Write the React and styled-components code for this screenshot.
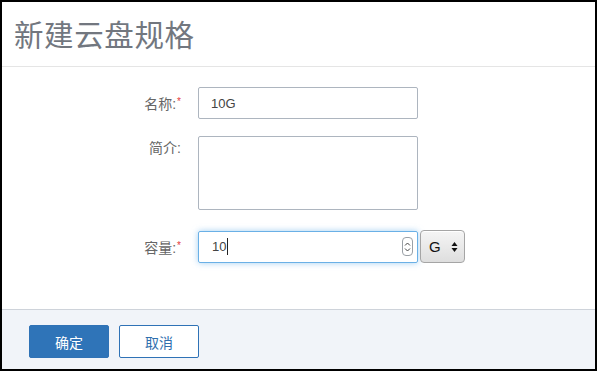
import React from "react"
import styled, { createGlobalStyle } from "styled-components"

const GlobalStyle = createGlobalStyle`
  html, body {
    margin: 0;
    padding: 0;
    background: #fff;
  }
  * {
    box-sizing: border-box;
  }
`

const font = `"Liberation Sans", "Noto Sans CJK SC", "Noto Sans", sans-serif`

export default function App() {
  return (
    <>
      <GlobalStyle />
      <Dialog>
        <Header>
          <Title>新建云盘规格</Title>
        </Header>
        <Body>
          <Row>
            <Label>
              名称:<Required>*</Required>
            </Label>
            <Input defaultValue="10G" />
          </Row>
          <Row $top $gap={17}>
            <Label $offset>简介:</Label>
            <TextArea />
          </Row>
          <Row $gap={20}>
            <Label>
              容量:<Required>*</Required>
            </Label>
            <NumberBox>
              <NumberValue>
                10<Caret />
              </NumberValue>
              <Spinner>
                <svg width="7" height="12" viewBox="0 0 7 12">
                  <path d="M1 4.5 L3.5 2 L6 4.5" fill="none" stroke="#444" strokeWidth="1" />
                  <path d="M1 7.5 L3.5 10 L6 7.5" fill="none" stroke="#444" strokeWidth="1" />
                </svg>
              </Spinner>
            </NumberBox>
            <UnitSelect>
              <span>G</span>
              <svg width="7" height="12" viewBox="0 0 7 12">
                <path d="M0.5 5 L3.5 1 L6.5 5 Z" fill="#111" />
                <path d="M0.5 7 L3.5 11 L6.5 7 Z" fill="#111" />
              </svg>
            </UnitSelect>
          </Row>
        </Body>
        <Footer>
          <Button $primary>确定</Button>
          <Button>取消</Button>
        </Footer>
      </Dialog>
    </>
  )
}

const Dialog = styled.div`
  width: 597px;
  height: 371px;
  border: 2px solid #000;
  display: flex;
  flex-direction: column;
  font-family: ${font};
  background: #fff;
`

const Header = styled.div`
  height: 65px;
  border-bottom: 1px solid #e5e5e5;
  display: flex;
  align-items: center;
  padding: 0 12px 2px;
`

const Title = styled.h1`
  margin: 0;
  font-size: 29.5px;
  font-weight: normal;
  color: #72777f;
  letter-spacing: 0.6px;
`

const Body = styled.div`
  flex: 1;
  padding-top: 20px;
  display: flex;
  flex-direction: column;
`

const Row = styled.div`
  display: flex;
  align-items: ${(p) => (p.$top ? "flex-start" : "center")};
  margin-top: ${(p) => (p.$gap != null ? p.$gap : 16)}px;
  &:first-child {
    margin-top: 0;
  }
`

const Label = styled.label`
  width: 179px;
  margin-right: 17px;
  text-align: right;
  font-size: 14px;
  color: #666;
  padding-top: ${(p) => (p.$offset ? "1px" : "0")};
`

const Required = styled.span`
  color: #e4393c;
  font-size: 10px;
  vertical-align: 4px;
  margin-left: 1px;
`

const Input = styled.input`
  width: 220px;
  height: 32px;
  border: 1px solid #adb5bf;
  border-radius: 2px;
  padding: 0 12px;
  font-family: ${font};
  font-size: 13px;
  color: #444;
  outline: none;
`

const TextArea = styled.textarea`
  width: 220px;
  height: 74px;
  border: 1px solid #adb5bf;
  border-radius: 2px;
  resize: none;
  outline: none;
  font-family: ${font};
  font-size: 13px;
`

const NumberBox = styled.div`
  width: 220px;
  height: 32px;
  border: 1px solid #6ab0e6;
  border-radius: 2px;
  box-shadow: 0 0 6px rgba(102, 175, 233, 0.6);
  display: flex;
  align-items: center;
  justify-content: space-between;
  padding: 0 4px 0 13px;
  font-size: 13px;
  color: #444;
`

const NumberValue = styled.span`
  display: flex;
  align-items: center;
`

const Caret = styled.span`
  display: inline-block;
  width: 1px;
  height: 17px;
  background: #222;
  margin-left: 1px;
`

const Spinner = styled.span`
  width: 11px;
  height: 19px;
  border: 1px solid #9aa0a6;
  border-radius: 4px;
  display: flex;
  align-items: center;
  justify-content: center;
  background: #fff;
`

const UnitSelect = styled.div`
  margin-left: 2px;
  width: 45px;
  height: 33px;
  border: 1px solid #a5a5a5;
  border-radius: 4px;
  background: linear-gradient(#f5f5f5, #dedede);
  box-shadow: inset 0 1px 0 #fff;
  display: flex;
  align-items: center;
  justify-content: space-between;
  padding: 0 6px 0 8px;
  font-size: 15px;
  color: #111;
`

const Footer = styled.div`
  height: 60px;
  border-top: 1px solid #ced3da;
  background: #f1f4f9;
  display: flex;
  align-items: center;
  gap: 10px;
  padding: 4px 0 0 27px;
`

const Button = styled.button`
  width: 80px;
  height: 33px;
  border-radius: 2px;
  font-family: ${font};
  font-size: 14px;
  cursor: pointer;
  border: 1px solid #2f72b6;
  background: ${(p) => (p.$primary ? "#2f74b8" : "#fff")};
  color: ${(p) => (p.$primary ? "#fff" : "#2f6fae")};
`
